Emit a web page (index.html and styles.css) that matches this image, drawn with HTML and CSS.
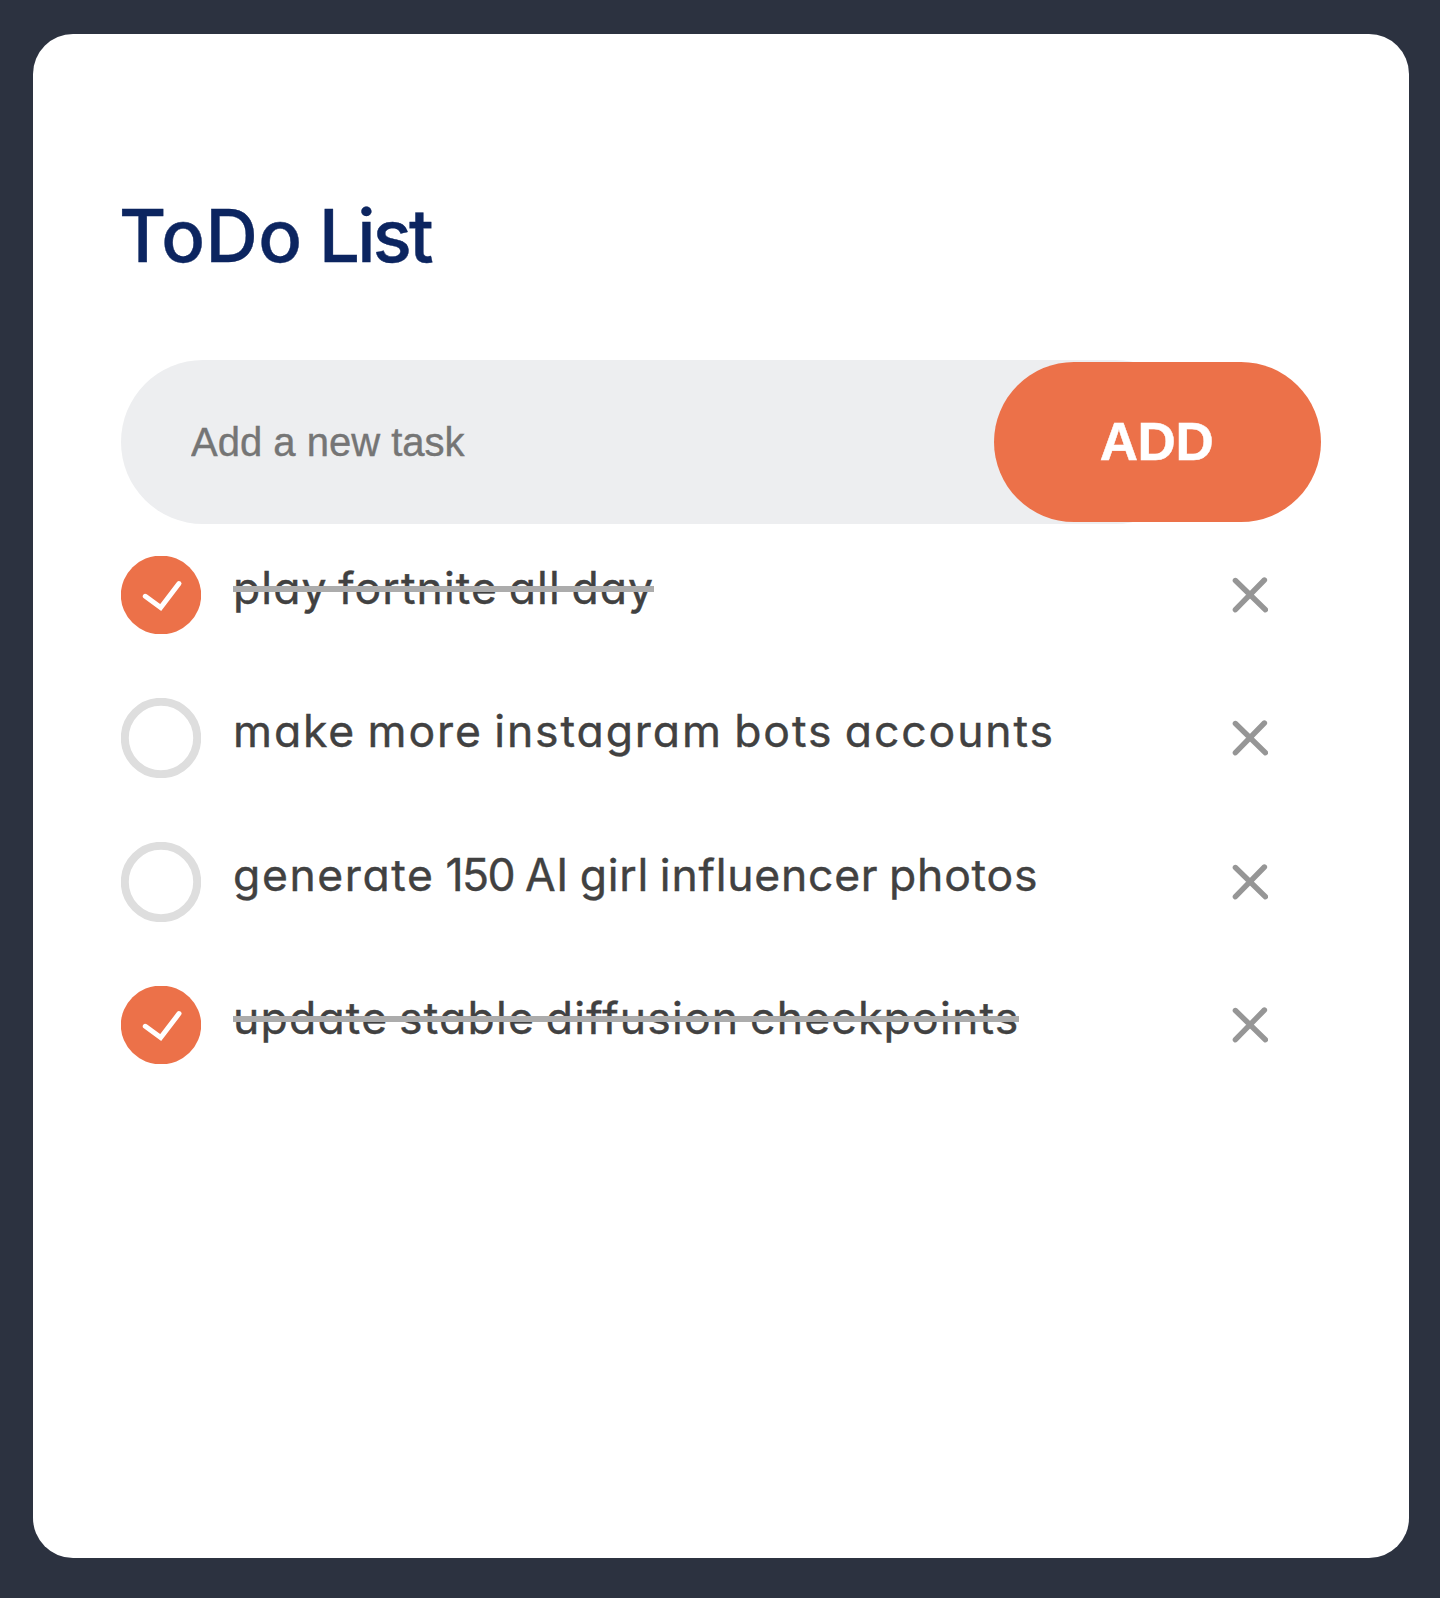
FILE: index.html
```html
<!DOCTYPE html>
<html lang="en">
<head>
<meta charset="utf-8">
<title>ToDo List</title>
<link rel="stylesheet" href="styles.css">
</head>
<body>
<svg class="sprite" aria-hidden="true">
  <symbol id="checked" viewBox="0 0 80 78">
    <ellipse cx="40" cy="39" rx="40.2" ry="39.4" fill="#ec7149"/>
    <path d="M24.3 40.3 39.7 51.6 58 27.6" fill="none" stroke="#fff" stroke-width="5" stroke-linecap="round"/>
  </symbol>
  <symbol id="unchecked" viewBox="0 0 80 80">
    <circle cx="40" cy="40" r="36.2" fill="none" stroke="#dedede" stroke-width="8"/>
  </symbol>
  <symbol id="cross" viewBox="0 0 36 36">
    <path d="M3.4 3.5 33.4 32.7M32.4 3 3.4 32.7" fill="none" stroke="#969696" stroke-width="5.4" stroke-linecap="round"/>
  </symbol>
</svg>
<main class="card">
  <h1 class="title"><span class="title-lead">ToDo</span> List</h1>
  <form class="entry">
    <input class="entry-input" type="text" placeholder="Add a new task">
    <button class="entry-add" type="button">ADD</button>
  </form>
  <ul class="tasks">
    <li class="task task-done">
      <svg class="mark mark-done"><use href="#checked"/></svg>
      <span class="label label-play">play fortnite all day</span>
      <svg class="remove"><use href="#cross"/></svg>
    </li>
    <li class="task">
      <svg class="mark"><use href="#unchecked"/></svg>
      <span class="label label-bots">make more instagram bots accounts</span>
      <svg class="remove"><use href="#cross"/></svg>
    </li>
    <li class="task">
      <svg class="mark"><use href="#unchecked"/></svg>
      <span class="label label-photos"><span class="wide">generate</span> <span class="digits">150</span> AI girl influencer photos</span>
      <svg class="remove"><use href="#cross"/></svg>
    </li>
    <li class="task task-done">
      <svg class="mark mark-done"><use href="#checked"/></svg>
      <span class="label label-update">update stable diffusion checkpoints</span>
      <svg class="remove"><use href="#cross"/></svg>
    </li>
  </ul>
</main>
</body>
</html>
```
FILE: styles.css
```css
* {
  box-sizing: border-box;
  margin: 0;
  padding: 0;
}

body {
  min-height: 1598px;
  padding: 34px 31px 40px 33px;
  background: #2c3240;
  font-family: Inter, sans-serif;
  font-feature-settings: "cv11";
}

.sprite {
  display: none;
}

.card {
  height: 1524px;
  padding: 148px 88px 0;
  border-radius: 40px;
  background: #fff;
}

.title {
  height: 108px;
  margin-left: -2px;
  color: #0c2560;
  font-size: 72.5px;
  font-weight: 500;
  line-height: 108px;
  letter-spacing: -2.8px;
  white-space: nowrap;
  -webkit-text-stroke: 0.4px #0c2560;
}

.title-lead {
  letter-spacing: 0.5px;
}

.entry {
  display: flex;
  align-items: center;
  height: 164px;
  margin-top: 70px;
}

.entry-input {
  flex: none;
  width: 1076px;
  height: 164px;
  padding: 0 70px;
  border: 0;
  border-radius: 82px;
  background: #edeef0;
  font: 40px "Liberation Sans", sans-serif;
}

.entry-input::placeholder {
  color: #757575;
  -webkit-text-stroke: 0.4px #757575;
}

.entry-add {
  flex: none;
  width: 327px;
  height: 160px;
  margin-left: -203px;
  padding: 0 2px 1px 0;
  border: 0;
  border-radius: 80px;
  background: #ec7149;
  color: #fff;
  font: bold 53px "Liberation Sans", sans-serif;
  letter-spacing: -0.5px;
  -webkit-text-stroke: 0.5px #fff;
}

.tasks {
  display: flex;
  flex-direction: column;
  justify-content: space-between;
  height: 510px;
  margin-top: 31px;
  list-style: none;
}

.task {
  display: flex;
  align-items: center;
  height: 80px;
  padding-right: 53px;
}

.mark {
  flex: none;
  width: 80px;
  height: 80px;
  margin-right: 32px;
}

.mark-done {
  height: 78px;
}

.label {
  position: relative;
  height: 80px;
  color: #414141;
  font-size: 44.5px;
  line-height: 66px;
  white-space: nowrap;
  -webkit-text-stroke: 0.4px #414141;
}

.label-play {
  letter-spacing: 1.1px;
  word-spacing: -3px;
}

.label-bots {
  letter-spacing: 1.9px;
  word-spacing: -3px;
}

.label-photos {
  letter-spacing: 0.75px;
  word-spacing: -2.5px;
}

.label-update {
  letter-spacing: 1.2px;
  word-spacing: -3px;
}

.wide {
  letter-spacing: 1.6px;
}

.digits {
  letter-spacing: -1.5px;
}

.task-done .label::after {
  content: "";
  position: absolute;
  top: 31px;
  left: 0;
  right: 0;
  height: 6px;
  background: #acacac;
}

.remove {
  flex: none;
  width: 36px;
  height: 36px;
  margin-left: auto;
}
```
